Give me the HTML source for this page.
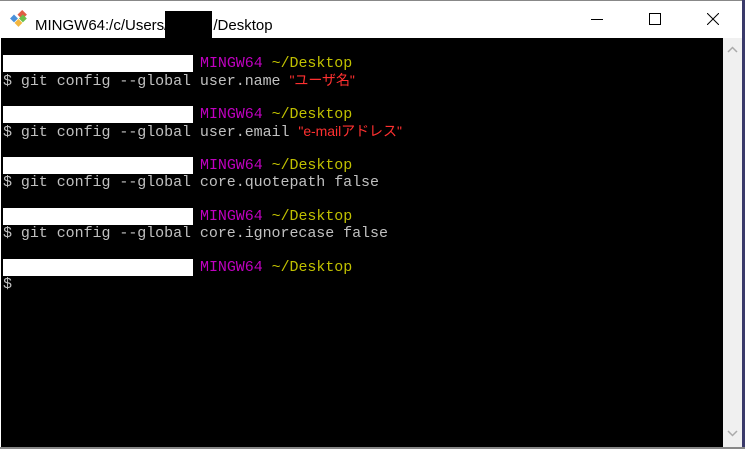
<!DOCTYPE html><html><head><style>
body{margin:0;width:745px;height:449px;overflow:hidden;background:#fff;position:relative;font-family:"Liberation Sans",sans-serif}
.title{position:absolute;left:0;top:0;width:745px;height:38px;background:#fff;border-top:1px solid #888;box-sizing:border-box}
.term{position:absolute;left:1px;top:38px;width:722px;height:409px;background:#000}
.sb{position:absolute;left:723px;top:38px;width:19px;height:409px;background:#f0f0f0}
.edge{position:absolute;left:742px;top:0;width:3px;height:449px;background:#3a3a6a}
.bot{position:absolute;left:0;top:447px;width:745px;height:2px;background:#888}
.l{position:absolute;left:3px;font:15px/17px "Liberation Mono","Noto Sans CJK JP",monospace;letter-spacing:-0.05px;color:#c0c0c0;white-space:pre}
.w{display:inline-block;width:190px;height:17px;background:#fff;vertical-align:top;margin-right:7px}
.m{color:#c000c0}.y{color:#c0c000}.r{color:#ff3030;font-family:"Liberation Sans","Noto Sans CJK JP",sans-serif;font-size:14px}
</style></head><body>
<div class="title">
<svg style="position:absolute;left:9px;top:8px" width="20" height="20" viewBox="0 0 18 18"><rect x="5" y="0.5" width="6" height="6" transform="rotate(45 8 9)" fill="#e05d44"/><rect x="2" y="6" width="5" height="5" transform="rotate(45 4.5 8.5)" fill="#4a90d9"/><rect x="10" y="6" width="5" height="5" transform="rotate(45 12.5 8.5)" fill="#6cc04a"/><rect x="6" y="10" width="5" height="5" transform="rotate(45 8.5 12.5)" fill="#f3b63f"/></svg>
<div style="position:absolute;left:35px;top:10px;font-size:15px;color:#000">MINGW64:/c/Users/<span style="display:inline-block;width:47px;height:28px;background:#000;vertical-align:-9px;margin:0 1px 0 -3px"></span>/Desktop</div>
<div style="position:absolute;left:591px;top:18px;width:12px;height:1px;background:#000"></div>
<div style="position:absolute;left:649px;top:12px;width:10px;height:10px;border:1px solid #000"></div>
<svg style="position:absolute;left:707px;top:12px" width="12" height="12"><path d="M0 0L12 12M12 0L0 12" stroke="#000" stroke-width="1"/></svg>
</div>
<div class="term"></div>
<div class="sb"><svg style="position:absolute;left:4px;top:8px" width="11" height="7"><path d="M1 6L5.5 1.5L10 6" stroke="#aaa" stroke-width="1.5" fill="none"/></svg><svg style="position:absolute;left:4px;top:392px" width="11" height="7"><path d="M1 1L5.5 5.5L10 1" stroke="#aaa" stroke-width="1.5" fill="none"/></svg></div>
<div class="edge"></div><div class="bot"></div>
<div class="l" style="top:55px"><span class="w"></span><span class="m">MINGW64</span> <span class="y">~/Desktop</span></div>
<div class="l" style="top:72px">$ git config --global user.name <span class="r">"ユーザ名"</span></div>
<div class="l" style="top:106px"><span class="w"></span><span class="m">MINGW64</span> <span class="y">~/Desktop</span></div>
<div class="l" style="top:123px">$ git config --global user.email <span class="r">"e-mailアドレス"</span></div>
<div class="l" style="top:157px"><span class="w"></span><span class="m">MINGW64</span> <span class="y">~/Desktop</span></div>
<div class="l" style="top:174px">$ git config --global core.quotepath false</div>
<div class="l" style="top:208px"><span class="w"></span><span class="m">MINGW64</span> <span class="y">~/Desktop</span></div>
<div class="l" style="top:225px">$ git config --global core.ignorecase false</div>
<div class="l" style="top:259px"><span class="w"></span><span class="m">MINGW64</span> <span class="y">~/Desktop</span></div>
<div class="l" style="top:276px">$</div>
</body></html>
